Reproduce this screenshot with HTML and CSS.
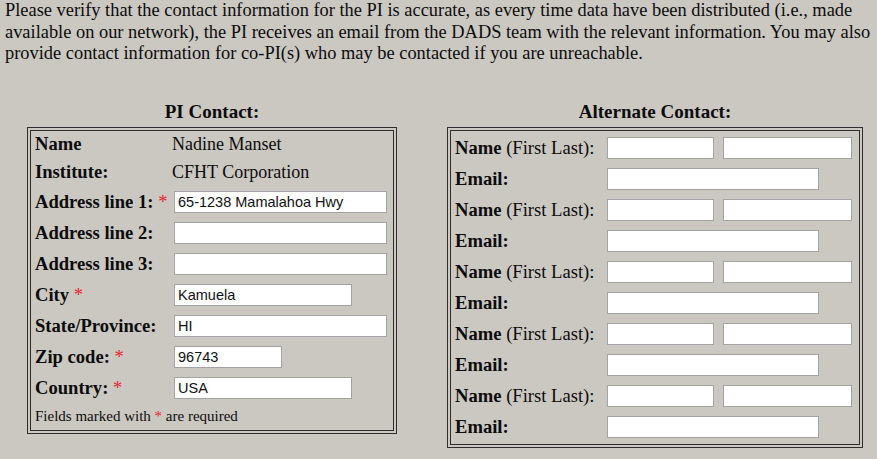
FILE: index.html
```html
<!DOCTYPE html>
<html lang="en">
<head>
    <meta charset="UTF-8">
    <meta name="viewport" content="width=device-width, initial-scale=1.0">
    <title>Contact Information</title>
    <link rel="stylesheet" href="styles.css">
</head>
<body>
    <p class="intro">Please verify that the contact information for the PI is accurate, as every time data have been distributed (i.e., made<br>
    available on our network), the PI receives an email from the DADS team with the relevant information. You may also<br>
    provide contact information for co-PI(s) who may be contacted if you are unreachable.</p>

    <div class="contacts">
        <section class="contact contact-pi">
            <h3 class="contact-title">PI Contact:</h3>
            <div class="contact-box pi-grid">
                <span class="label">Name</span>
                <span class="value">Nadine Manset</span>

                <span class="label">Institute:</span>
                <span class="value">CFHT Corporation</span>

                <label class="label" for="addr1">Address line 1: <span class="req">*</span></label>
                <span><input class="field field-long" type="text" id="addr1" value="65-1238 Mamalahoa Hwy"></span>

                <label class="label" for="addr2">Address line 2:</label>
                <span><input class="field field-long" type="text" id="addr2"></span>

                <label class="label" for="addr3">Address line 3:</label>
                <span><input class="field field-long" type="text" id="addr3"></span>

                <label class="label" for="city">City <span class="req">*</span></label>
                <span><input class="field field-mid" type="text" id="city" value="Kamuela"></span>

                <label class="label" for="state">State/Province:</label>
                <span><input class="field field-long" type="text" id="state" value="HI"></span>

                <label class="label" for="zip">Zip code: <span class="req">*</span></label>
                <span><input class="field field-short" type="text" id="zip" value="96743"></span>

                <label class="label" for="country">Country: <span class="req">*</span></label>
                <span><input class="field field-mid" type="text" id="country" value="USA"></span>

                <span class="note">Fields marked with <span class="req">*</span> are required</span>
            </div>
        </section>

        <section class="contact contact-alt">
            <h3 class="contact-title">Alternate Contact:</h3>
            <div class="contact-box alt-grid">
                <span class="label">Name <span class="plain">(First Last):</span></span>
                <span class="name-pair"><input class="field field-first" type="text"><input class="field field-last" type="text"></span>
                <span class="label">Email:</span>
                <span><input class="field field-email" type="email"></span>

                <span class="label">Name <span class="plain">(First Last):</span></span>
                <span class="name-pair"><input class="field field-first" type="text"><input class="field field-last" type="text"></span>
                <span class="label">Email:</span>
                <span><input class="field field-email" type="email"></span>

                <span class="label">Name <span class="plain">(First Last):</span></span>
                <span class="name-pair"><input class="field field-first" type="text"><input class="field field-last" type="text"></span>
                <span class="label">Email:</span>
                <span><input class="field field-email" type="email"></span>

                <span class="label">Name <span class="plain">(First Last):</span></span>
                <span class="name-pair"><input class="field field-first" type="text"><input class="field field-last" type="text"></span>
                <span class="label">Email:</span>
                <span><input class="field field-email" type="email"></span>

                <span class="label">Name <span class="plain">(First Last):</span></span>
                <span class="name-pair"><input class="field field-first" type="text"><input class="field field-last" type="text"></span>
                <span class="label">Email:</span>
                <span><input class="field field-email" type="email"></span>
            </div>
        </section>
    </div>
</body>
</html>
```

FILE: styles.css
```css
body{
    margin: 0;
    padding: 0 0 0 5px;
    background-color: #cbc8c2;
    color: #0c0c0c;
    font-family: "Liberation Serif", "Times New Roman", serif;
    font-size: 16px;
}
.intro{
    margin: 0;
    font-size: 18.4px;
    line-height: 21.6px;
    white-space: nowrap;
}
.contacts{
    display: flex;
    gap: 50px;
    margin-top: 36px;
    padding-left: 22px;
}
.contact-pi{
    width: 370px;
}
.contact-alt{
    width: 416px;
}
.contact-title{
    margin: 0 0 4px;
    font-size: 19px;
    line-height: 22px;
    text-align: center;
}
.contact-box{
    border: 4px double #2e2e2e;
    display: grid;
    align-items: center;
}
.pi-grid{
    grid-template-columns: 137px 1fr;
    grid-template-rows: 27px 29px repeat(7, 31px) 26px;
    padding-left: 4px;
}
.alt-grid{
    grid-template-columns: 152px 1fr;
    grid-auto-rows: 31px;
    padding: 2px 0 1px 4px;
}
.label{
    font-weight: bold;
    font-size: 18.6px;
    white-space: nowrap;
}
.plain{
    font-weight: normal;
}
.value{
    font-size: 18px;
}
.req{
    color: #e8232d;
    font-weight: normal;
}
.note{
    grid-column: 1 / 3;
    font-size: 15px;
}
.field{
    box-sizing: border-box;
    height: 22px;
    margin: 0;
    padding: 0 3px;
    border: 1px solid #a3a3a3;
    background: #fff;
    font-family: "Liberation Sans", Arial, sans-serif;
    font-size: 14.5px;
    color: #111;
    vertical-align: middle;
}
.pi-grid .field{
    margin-left: 2px;
}
.field-long{
    width: 213px;
}
.field-mid{
    width: 178px;
}
.field-short{
    width: 108px;
}
.name-pair{
    display: flex;
    gap: 9px;
}
.field-first{
    width: 107px;
}
.field-last{
    width: 129px;
}
.field-email{
    width: 212px;
}
```
